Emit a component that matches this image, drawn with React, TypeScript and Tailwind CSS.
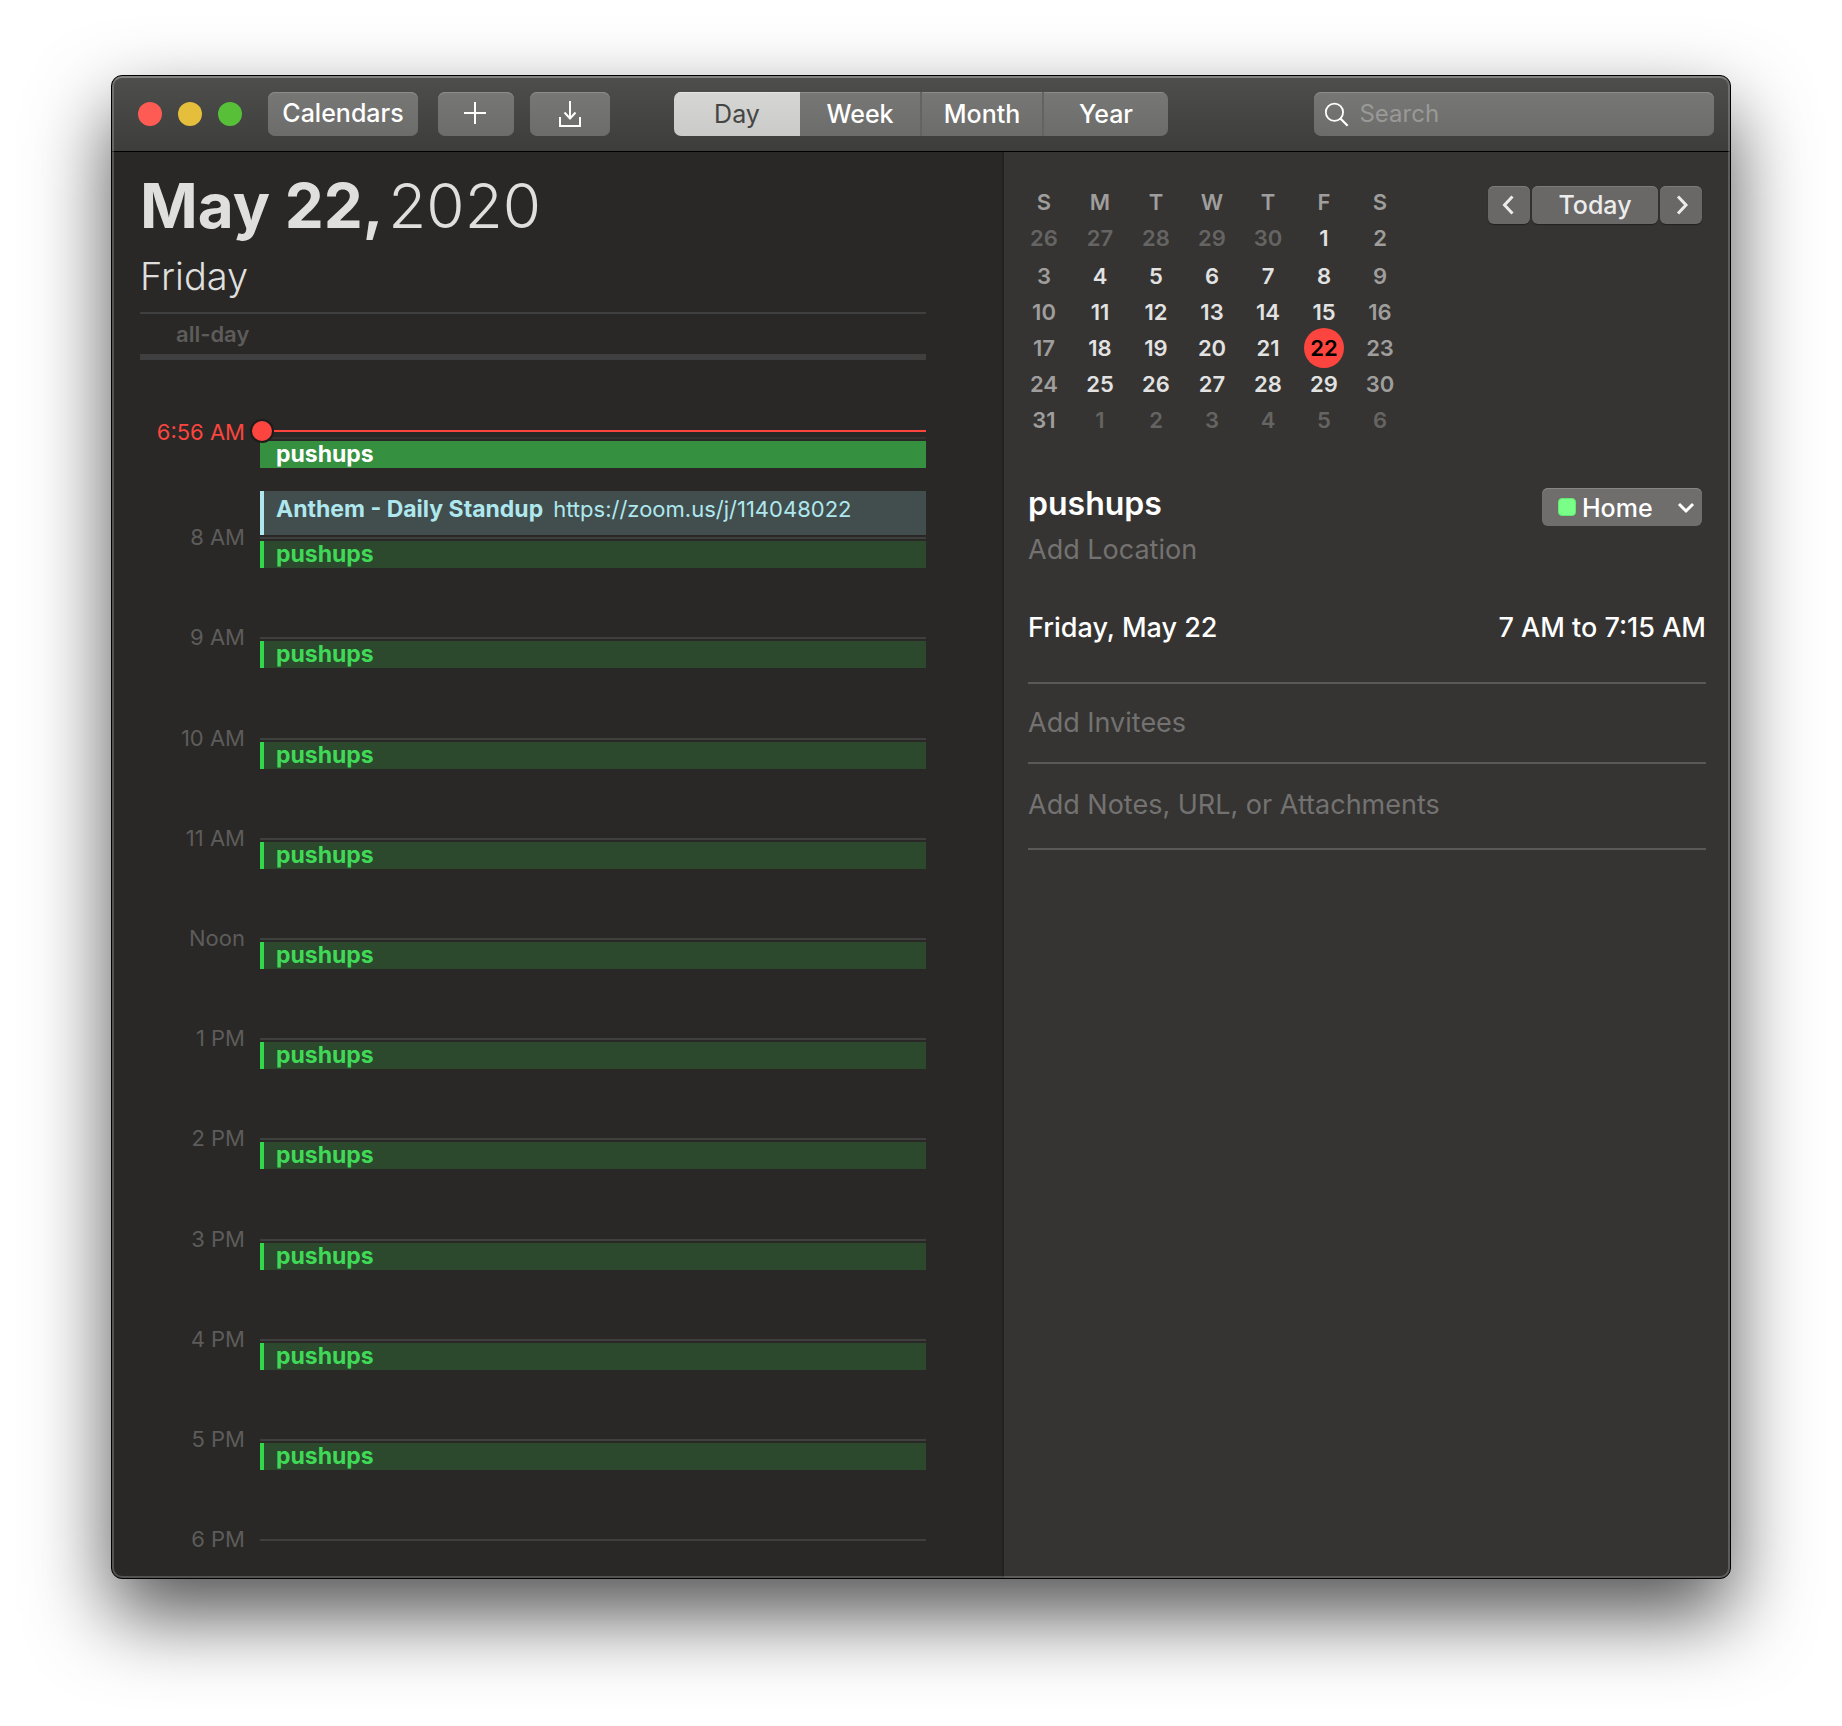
import React from "react";

type Tone = "out" | "weekend" | "day" | "today";

const WEEKDAYS = ["S", "M", "T", "W", "T", "F", "S"];

const WEEKS = [
  [26, 27, 28, 29, 30, 1, 2],
  [3, 4, 5, 6, 7, 8, 9],
  [10, 11, 12, 13, 14, 15, 16],
  [17, 18, 19, 20, 21, 22, 23],
  [24, 25, 26, 27, 28, 29, 30],
  [31, 1, 2, 3, 4, 5, 6],
];

const TONES: Record<Tone, string> = {
  out: "text-[#656463]",
  weekend: "text-[#9f9e9d]",
  day: "text-[#e2e2e2]",
  today: "bg-[#fc453e] text-black",
};

function toneOf(week: number, column: number, day: number): Tone {
  if ((week === 0 && day > 20) || (week === 5 && day < 10)) return "out";
  if (day === 22) return "today";
  return column === 0 || column === 6 ? "weekend" : "day";
}

const HOURS = ["8 AM", "9 AM", "10 AM", "11 AM", "Noon", "1 PM", "2 PM", "3 PM", "4 PM", "5 PM"];

const toolbarButton =
  "flex h-11 items-center justify-center bg-linear-to-b from-[#777775] to-[#6c6c6a] text-[25px] font-medium text-white shadow-[inset_0_1px_0_#8c8c8a]";

function Toolbar() {
  return (
    <header className="grid h-[76px] grid-cols-[1fr_auto_1fr] items-center border-b border-black bg-linear-to-b from-[#4e4e4c] to-[#3d3d3b] px-4">
      <div className="flex items-center pl-[10px]">
        <div className="flex gap-4">
          <button aria-label="Close" className="size-6 rounded-full bg-[#ff5b55]" />
          <button aria-label="Minimize" className="size-6 rounded-full bg-[#e5be3c]" />
          <button aria-label="Zoom" className="size-6 rounded-full bg-[#58c038]" />
        </div>
        <button className={`${toolbarButton} ml-[26px] w-[150px] rounded-[7px]`}>Calendars</button>
        <button aria-label="Add event" className={`${toolbarButton} ml-5 w-[76px] rounded-[7px]`}>
          <svg width="24" height="24" viewBox="0 0 24 24" stroke="currentColor" strokeWidth="2" fill="none">
            <path d="M11 0v22M0 11h22" />
          </svg>
        </button>
        <button aria-label="Inbox" className={`${toolbarButton} ml-4 w-20 rounded-[7px]`}>
          <svg width="24" height="28" viewBox="0 0 24 28" stroke="currentColor" strokeWidth="2" fill="none">
            <path d="M12 1v17M6.500 12.500l5.500 6 5.500-6M2 17v9h20v-9" />
          </svg>
        </button>
      </div>
      <div className="flex overflow-hidden rounded-[7px]">
        <button
          aria-pressed="true"
          className="h-11 w-[126px] bg-linear-to-b from-[#d6d6d4] to-[#cacac8] pt-[2px] text-[25px] text-[#454543] shadow-[inset_0_1px_0_#e4e4e2]"
        >
          Day
        </button>
        <button className={`${toolbarButton} w-[122px] border-r-2 border-[#636361] pt-[2px]`}>Week</button>
        <button className={`${toolbarButton} w-[122px] border-r-2 border-[#636361] pt-[2px]`}>Month</button>
        <button className={`${toolbarButton} w-[124px] pt-[2px]`}>Year</button>
      </div>
      <label className="flex h-11 w-[400px] items-center gap-[10px] justify-self-end rounded-[7px] bg-linear-to-b from-[#777775] to-[#6c6c6a] pl-[10px] shadow-[inset_0_1px_0_#8c8c8a]">
        <svg width="28" height="28" viewBox="0 0 28 28" fill="none" stroke="#fff" strokeWidth="2">
          <circle cx="11.500" cy="12" r="9.500" />
          <path d="M18 19l8 8" strokeWidth="2.500" />
        </svg>
        <input
          type="search"
          aria-label="Search"
          placeholder="Search"
          className="w-full min-w-0 bg-transparent text-[24px] text-white outline-none placeholder:text-[#999997]"
        />
      </label>
    </header>
  );
}

function Pushups() {
  return (
    <div className="mt-[2px] h-[27px] border-l-4 border-[#32d74b] bg-[#2c482d] pl-3 text-[23px] leading-[26px] font-bold text-[#40d957]">
      pushups
    </div>
  );
}

function DayView() {
  return (
    <section className="flex w-[892px] shrink-0 flex-col border-r-2 border-[#232221] bg-[#292826] pr-[76px] pl-7">
      <h1 className="mt-[22px] text-[62px] leading-[64px] font-bold text-[#dfdfde]">
        May 22, <span className="-ml-2 font-light">2020</span>
      </h1>
      <p className="mt-4 text-[38px] leading-[44px] font-light text-[#dfdfde]">Friday</p>
      <div className="mt-[14px] h-12 border-t-2 border-b-[6px] border-[#3f3f3f] pl-[36px] text-[22px] leading-[40px] font-semibold text-[#5d5c5b]">
        all-day
      </div>
      <ol className="mt-[66px] flex flex-1 flex-col text-[22px] leading-[22px] text-[#5d5c5b]">
        <li className="relative min-h-0 flex-[1_0_100px] pl-[120px]">
          <div className="pt-[11px]">
            <div className="h-[2px] bg-[#333231]" />
            <div className="mt-[2px] h-[27px] bg-[#35903f] pl-4 text-[23px] leading-[26px] font-bold text-white">
              pushups
            </div>
            <div className="mt-[23px] h-11 border-l-4 border-[#aee8ee] bg-[#424d4d] pt-1 pl-3 leading-7 text-[#aee8ee]">
              <b className="text-[23px]">Anthem - Daily Standup</b>
              <a href="https://zoom.us/j/114048022" className="ml-[10px]">
                https://zoom.us/j/114048022
              </a>
            </div>
          </div>
          <div className="absolute inset-x-0 top-[-7px] flex items-center">
            <span className="w-[110px] pt-[2px] pr-[5px] text-right text-[#fc453e]">6:56 AM</span>
            <i className="size-6 rounded-full border-2 border-[#1d1c1b] bg-[#fc453e]" />
            <i className="h-[2px] flex-1 bg-[#fc453e]" />
          </div>
        </li>
        {HOURS.map((hour) => (
          <li key={hour} className="grid flex-[1_0_100px] grid-cols-[120px_1fr]">
            <span className="pr-[15px] text-right">{hour}</span>
            <div className="pt-[11px]">
              <div className="h-[2px] bg-[#3f3f3e]" />
              <Pushups />
            </div>
          </li>
        ))}
        <li className="grid h-[50px] shrink-0 grid-cols-[120px_1fr]">
          <span className="pr-[15px] text-right">6 PM</span>
          <div className="pt-[11px]">
            <div className="h-[2px] bg-[#3f3f3e]" />
          </div>
        </li>
      </ol>
    </section>
  );
}

function MiniMonth() {
  return (
    <table className="w-[392px] table-fixed text-center text-[22px] leading-9 font-semibold">
      <thead>
        <tr className="text-[#9f9e9d]">
          {WEEKDAYS.map((name, i) => (
            <th key={i} className="p-0 font-semibold">
              {name}
            </th>
          ))}
        </tr>
      </thead>
      <tbody>
        {WEEKS.map((week, w) => (
          <tr key={w} className={w === 0 ? "h-[38px] align-top" : "h-9"}>
            {week.map((day, d) => (
              <td key={d} className="p-0">
                <span
                  className={`mx-auto block w-10 rounded-full ${TONES[toneOf(w, d, day)]} ${
                    day === 22 ? "-my-[2px] leading-10" : ""
                  }`}
                >
                  {day}
                </span>
              </td>
            ))}
          </tr>
        ))}
      </tbody>
    </table>
  );
}

const navButton =
  "flex h-[38px] items-center justify-center rounded-[6px] bg-[#696867] text-[25px] font-medium text-[#ececec] shadow-[inset_0_1px_0_#7c7b7a,0_1px_1px_#222]";

function Chevron({ d }: { d: string }) {
  return (
    <svg width="20" height="20" viewBox="0 0 20 20" fill="none" stroke="currentColor" strokeWidth="3">
      <path d={d} />
    </svg>
  );
}

const fieldClass = "block w-full outline-none placeholder:text-[#737271]";

function Inspector() {
  return (
    <section className="flex-1 bg-[#353432] px-6 text-[27px] leading-8 text-white">
      <div className="flex items-start justify-between pt-[32px] pr-1">
        <div className="-ml-3">
          <MiniMonth />
        </div>
        <div className="mt-[2px] flex gap-[2px]">
          <button aria-label="Previous day" className={`${navButton} w-[42px]`}>
            <Chevron d="M13.500 1.500L5.500 10l8 8.500" />
          </button>
          <button className={`${navButton} w-[126px]`}>Today</button>
          <button aria-label="Next day" className={`${navButton} w-[42px]`}>
            <Chevron d="M7 1.500L15 10l-8 8.500" />
          </button>
        </div>
      </div>
      <div className="mt-[50px] flex justify-between pr-1">
        <h2 className="text-[32px] leading-8 font-semibold">pushups</h2>
        <div className="relative h-[38px] w-[160px]">
          <select
            aria-label="Calendar"
            className="size-full appearance-none rounded-[6px] bg-[#6f6e6d] pt-[2px] pl-10 text-[25px] font-medium text-white shadow-[inset_0_1px_0_#878685]"
          >
            <option>Home</option>
          </select>
          <i className="pointer-events-none absolute top-[10px] left-4 size-[18px] rounded-[4px] border border-[#62e874] bg-[#79ff88]" />
          <svg
            className="pointer-events-none absolute top-[10px] right-[6px]"
            width="20"
            height="20"
            viewBox="0 0 20 20"
            fill="none"
            stroke="#fff"
            strokeWidth="3"
          >
            <path d="M3 6l7 7 7-7" />
          </svg>
        </div>
      </div>
      <div className="pt-2">
        <input aria-label="Location" placeholder="Add Location" className={fieldClass} />
      </div>
      <div className="mt-[46px] flex justify-between pb-[38px] font-medium">
        <span>Friday, May 22</span>
        <span>7 AM to 7:15 AM</span>
      </div>
      <div className="border-t-2 border-[#5a5957] py-[23px]">
        <input aria-label="Invitees" placeholder="Add Invitees" className={fieldClass} />
      </div>
      <div className="border-y-2 border-[#5a5957] pt-[25px] pb-[27px]">
        <input aria-label="Notes" placeholder="Add Notes, URL, or Attachments" className={fieldClass} />
      </div>
    </section>
  );
}

export default function App() {
  return (
    <div className="flex min-h-screen bg-white px-[111px] pt-[75px] pb-[147px] font-['Inter',sans-serif]">
      <main className="relative flex min-w-0 flex-1 flex-col overflow-hidden rounded-[11px] border border-black bg-[#353432] shadow-[0_36px_80px_rgba(0,0,0,0.68)]">
        <Toolbar />
        <div className="flex flex-1">
          <DayView />
          <Inspector />
        </div>
        <div className="pointer-events-none absolute inset-0 rounded-[10px] border-2 border-white/20 border-t-white/30" />
      </main>
    </div>
  );
}
